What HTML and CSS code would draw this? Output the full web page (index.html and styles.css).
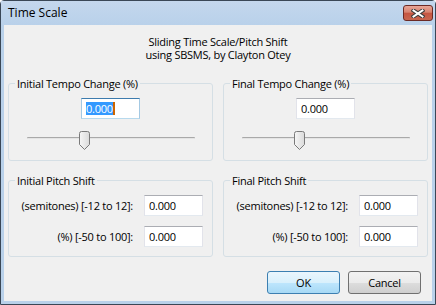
FILE: index.html
```html
<!DOCTYPE html>
<html lang="en">
<head>
<meta charset="UTF-8">
<title>Time Scale</title>
<link rel="stylesheet" href="styles.css">
</head>
<body>
<div class="window">
  <div class="titlebar">
    <span class="title">Time Scale</span>
    <div class="close">
      <svg width="14" height="9" viewBox="0 0 14 9">
        <path d="M2.5,1.5 L11.5,7.5 M11.5,1.5 L2.5,7.5" stroke="#3b3b3b" stroke-width="4" stroke-linecap="square"/>
        <path d="M2.5,1.5 L11.5,7.5 M11.5,1.5 L2.5,7.5" stroke="#fff" stroke-width="2" stroke-linecap="square"/>
      </svg>
    </div>
  </div>
  <div class="client">
    <p class="intro">Sliding Time Scale/Pitch Shift<br>using SBSMS, by Clayton Otey</p>

    <div class="groups">
      <fieldset class="group tempo">
        <legend>Initial Tempo Change (%)</legend>
        <div class="field focused"><span class="sel">0.000</span><span class="caret"></span></div>
        <div class="slider">
          <div class="track"></div>
          <svg class="thumb" width="11" height="19" viewBox="0 0 11 19">
            <defs>
              <linearGradient id="tg1" x1="0" y1="0" x2="1" y2="0">
                <stop offset="0" stop-color="#f6f6f6"/>
                <stop offset="1" stop-color="#dadada"/>
              </linearGradient>
            </defs>
            <path d="M0.5,2.5 a2,2 0 0 1 2,-2 h6 a2,2 0 0 1 2,2 v11 l-5,5 l-5,-5 z" fill="url(#tg1)" stroke="#7a7a7a"/>
          </svg>
        </div>
      </fieldset>

      <fieldset class="group tempo">
        <legend>Final Tempo Change (%)</legend>
        <div class="field">0.000</div>
        <div class="slider">
          <div class="track"></div>
          <svg class="thumb" width="11" height="19" viewBox="0 0 11 19">
            <defs>
              <linearGradient id="tg2" x1="0" y1="0" x2="1" y2="0">
                <stop offset="0" stop-color="#f6f6f6"/>
                <stop offset="1" stop-color="#dadada"/>
              </linearGradient>
            </defs>
            <path d="M0.5,2.5 a2,2 0 0 1 2,-2 h6 a2,2 0 0 1 2,2 v11 l-5,5 l-5,-5 z" fill="url(#tg2)" stroke="#7a7a7a"/>
          </svg>
        </div>
      </fieldset>

      <fieldset class="group pitch">
        <legend>Initial Pitch Shift</legend>
        <div class="rows">
          <span class="lbl">(semitones) [-12 to 12]:</span>
          <div class="field">0.000</div>
          <span class="lbl">(%) [-50 to 100]:</span>
          <div class="field">0.000</div>
        </div>
      </fieldset>

      <fieldset class="group pitch">
        <legend>Final Pitch Shift</legend>
        <div class="rows">
          <span class="lbl">(semitones) [-12 to 12]:</span>
          <div class="field">0.000</div>
          <span class="lbl">(%) [-50 to 100]:</span>
          <div class="field">0.000</div>
        </div>
      </fieldset>
    </div>

    <div class="buttons">
      <button class="btn default">OK</button>
      <button class="btn">Cancel</button>
    </div>
  </div>
</div>
</body>
</html>
```

FILE: styles.css
```css
body {
  margin: 0;
  background: #ffffff;
  font-family: "Open Sans", "Noto Sans", sans-serif;
  font-size: 11px;
  color: #000;
}
.window {
  width: 436px;
  height: 305px;
  box-sizing: border-box;
  border: 1px solid #3a4756;
  border-radius: 4px 4px 0 0;
  background: #b9d1ea;
  padding: 0 3px 3px 3px;
  display: flex;
  flex-direction: column;
}
.titlebar {
  height: 24px;
  display: flex;
  align-items: flex-start;
  justify-content: space-between;
  background: linear-gradient(#c4d7ed, #b9d1ea);
  margin: 0 -3px;
  padding: 0 2px 0 7px;
}
.title {
  font-size: 12px;
  line-height: 24px;
}
.close {
  width: 30px;
  height: 16px;
  margin-top: 4px;
  box-sizing: border-box;
  border: 1px solid #6b2a25;
  border-radius: 3px;
  background: linear-gradient(#e8a597, #d7826f 45%, #c55541 50%, #c86650);
  display: flex;
  align-items: center;
  justify-content: center;
}
.client {
  flex: 1;
  background: #f0f0f0;
  padding: 0 4px;
  display: flex;
  flex-direction: column;
  letter-spacing: -0.25px;
}
.intro {
  margin: 10px 0 0;
  text-align: center;
  line-height: 13px;
}
.groups {
  margin-top: 16px;
  display: grid;
  grid-template-columns: 1fr 1fr;
  column-gap: 10px;
  row-gap: 13px;
}
.group {
  margin: 0;
  min-width: 0;
  border: 1px solid #d5dfe5;
  border-radius: 3px;
  padding: 0;
}
.group legend {
  margin-left: 6px;
  padding: 1px 2px 0;
  line-height: 12px;
}
.tempo {
  display: flex;
  flex-direction: column;
  align-items: center;
  padding: 8px 0 10px;
}
.field {
  width: 59px;
  height: 21px;
  box-sizing: border-box;
  background: #fff;
  border: 1px solid;
  border-color: #abadb3 #e2e3ea #e3e9ef #e2e3ea;
  padding: 0 4px;
  line-height: 19px;
}
.field.focused {
  border-color: #3d7bad #a4c9e3 #b7d9ed #a4c9e3;
  display: flex;
  align-items: center;
}
.sel {
  background: #3399ff;
  color: #fff;
  line-height: 13px;
}
.caret {
  width: 2px;
  height: 13px;
  background: #cc6600;
}
.slider {
  position: relative;
  width: 168px;
  height: 20px;
  margin-top: 11px;
}
.track {
  margin-top: 7px;
  height: 1px;
  background: #a9a9a9;
  border-bottom: 1px solid #e4e4e4;
  border-radius: 1px;
}
.thumb {
  position: absolute;
  left: 52px;
  top: 1px;
}
.pitch {
  padding: 8px 9px 9px 0;
}
.rows {
  display: grid;
  grid-template-columns: auto 59px;
  justify-content: end;
  align-items: center;
  column-gap: 11px;
  row-gap: 10px;
}
.lbl {
  text-align: right;
}
.buttons {
  margin-top: 14px;
  padding-right: 7px;
  display: flex;
  justify-content: flex-end;
  gap: 8px;
}
.btn {
  width: 73px;
  height: 23px;
  font-family: inherit;
  font-size: 11px;
  letter-spacing: -0.25px;
  color: #000;
  border: 1px solid #707070;
  border-radius: 3px;
  background: linear-gradient(#f2f2f2, #ebebeb 50%, #dddddd 51%, #cfcfcf);
  padding: 0;
}
.btn.default {
  border-color: #3c7fb1;
  background: linear-gradient(#eaf6fd, #d9f0fc 50%, #bee6fd 51%, #a7d9f5);
}
```
